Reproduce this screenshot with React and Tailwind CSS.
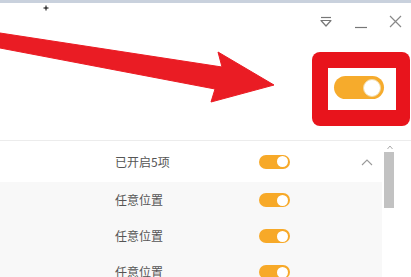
import React from 'react';

const cjk = { fontFamily: '"Noto Sans CJK SC", "Noto Sans", sans-serif' };

function Toggle({ big = false }) {
    // orange switch, knob on the right (on state)
    return big ? (
        <div className="w-[50px] h-[23px] rounded-full bg-[#f6ab2c] flex items-center justify-end pr-[3px]">
            <div className="w-[18px] h-[18px] rounded-full bg-white border border-[#f1d9a4]" />
        </div>
    ) : (
        <div className="w-[31px] h-[14px] rounded-full bg-[#f7a928] flex items-center justify-end pr-[2px]">
            <div className="w-[11px] h-[11px] rounded-full bg-white" />
        </div>
    );
}

function Row({ label, header = false }) {
    return (
        <div
            className={`flex items-center ${header ? 'h-[41px] bg-white' : 'h-[36px] bg-[#f8f8f8]'}`}
        >
            <span className="ml-[115px] w-[144px] text-[12px] text-[#555]" style={cjk}>
                {label}
            </span>
            <Toggle />
            {header && (
                <svg className="ml-[71px]" width="12" height="8" viewBox="0 0 12 8">
                    <path d="M1 7 L6 2 L11 7" fill="none" stroke="#9a9a9a" strokeWidth="1.1" />
                </svg>
            )}
        </div>
    );
}

export default function App() {
    return (
        <div className="relative w-[411px] h-[277px] overflow-hidden bg-white">
            <div className="h-[3px] bg-[#c9d1dd]" />

            {/* window buttons */}
            <div className="h-[37px] flex items-center justify-end pr-[9px] gap-[22px] text-[#777]">
                <svg width="14" height="12" viewBox="0 0 14 12">
                    <path d="M2 1.5 H12" stroke="#777" strokeWidth="1.2" />
                    <path d="M2 4.5 H12 L7 10 Z" fill="none" stroke="#777" strokeWidth="1.2" strokeLinejoin="round" />
                </svg>
                <svg width="12" height="14" viewBox="0 0 12 14">
                    <path d="M0 12.5 H12" stroke="#777" strokeWidth="1.2" />
                </svg>
                <svg width="13" height="13" viewBox="0 0 13 13">
                    <path d="M1 1 L12 12 M12 1 L1 12" stroke="#888" strokeWidth="1.2" />
                </svg>
            </div>

            {/* highlighted master switch */}
            <div className="flex justify-end pr-[1px] mt-[12px]">
                <div className="w-[98px] h-[74px] rounded-[8px] bg-[#e8141c] pl-[16px] pr-[14px] py-[16px]">
                    <div className="w-full h-full bg-white pl-[6px] pt-[8px]">
                        <Toggle big />
                    </div>
                </div>
            </div>

            {/* list */}
            <div className="mt-[14px] border-t border-[#ececec] flex">
                <div className="flex-1 flex flex-col">
                    <Row label="已开启5项" header />
                    <Row label="任意位置" />
                    <Row label="任意位置" />
                    <Row label="任意位置" />
                </div>
                <div className="w-[29px] bg-white flex flex-col items-start pl-[2px]">
                    <svg className="ml-[3px] mt-[4px]" width="6" height="5" viewBox="0 0 6 5">
                        <path d="M0.5 4 L3 1 L5.5 4" fill="none" stroke="#aaa" strokeWidth="1" />
                    </svg>
                    <div className="mt-[2px] w-[10px] h-[56px] bg-[#c2c2c2]" />
                </div>
            </div>

            {/* annotation arrow */}
            <svg className="absolute left-0 top-0 pointer-events-none" width="411" height="277" viewBox="0 0 411 277">
                <polygon
                    points="0,33 222,67 218,52 274,85 211,102 215,89 0,48"
                    fill="#ea1c24"
                    stroke="#ea1c24"
                    strokeWidth="1"
                    strokeLinejoin="round"
                />
                <path d="M43.5 8 H48.5 M46 5.5 V10.5" stroke="#000" strokeWidth="1" />
            </svg>
        </div>
    );
}
